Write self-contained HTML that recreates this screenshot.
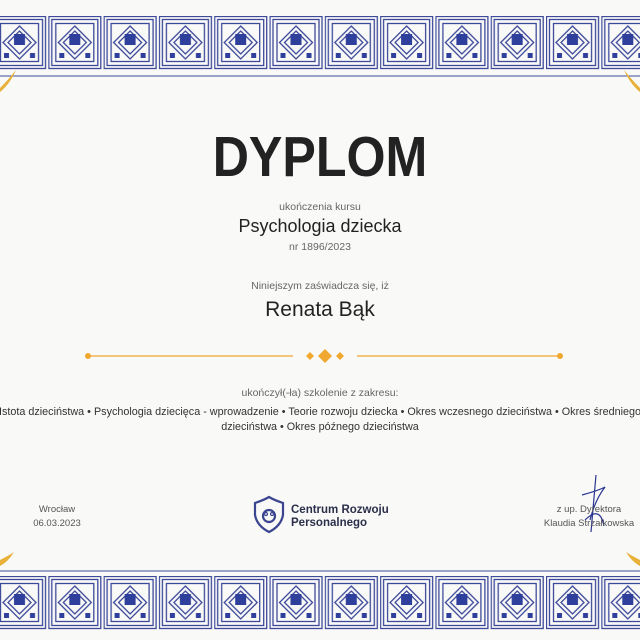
<!DOCTYPE html>
<html><head><meta charset="utf-8"><style>
body{margin:0;width:640px;height:640px;overflow:hidden;background:#f9f9f8;font-family:"Liberation Sans",sans-serif;position:relative}
.t{position:absolute;left:0;width:640px;text-align:center;white-space:nowrap;color:#222}
.g{color:#666}
.clip{position:absolute;left:0;top:0;width:640px;height:640px;overflow:hidden}
</style></head><body>
<svg width="640" height="640" style="position:absolute;left:0;top:0">
<defs>
<g id="tile" fill="none" stroke="#3d4a9a" stroke-width="1.3">
<rect x="0.5" y="0.5" width="52" height="52"/>
<rect x="3.5" y="3.5" width="46" height="46"/>
<rect x="7.5" y="7.5" width="38" height="38"/>
<path d="M26.5 10 L43 26.5 L26.5 43 L10 26.5Z"/>
<path d="M26.5 15 L38 26.5 L26.5 38 L15 26.5Z"/>
<rect x="21" y="18" width="11" height="11" fill="#2f3f9c" stroke="none"/>
<rect x="11" y="37" width="5" height="5" fill="#2f3f9c" stroke="none"/>
<rect x="37" y="37" width="5" height="5" fill="#2f3f9c" stroke="none"/>
</g>
<pattern id="row" x="-7" y="0" width="55.3" height="60" patternUnits="userSpaceOnUse"><use href="#tile"/></pattern>
</defs>
<g transform="translate(0,16)"><rect x="0" y="0" width="640" height="54" fill="url(#row)"/></g>
<line x1="0" y1="76" x2="640" y2="76" stroke="#3d4a9a" stroke-width="1"/>
<g transform="translate(0,576)"><rect x="0" y="0" width="640" height="54" fill="url(#row)"/></g>
<line x1="0" y1="571" x2="640" y2="571" stroke="#3d4a9a" stroke-width="1"/>
<path d="M0 88 Q8 80 16 70 Q10 84 0 92Z" fill="#e8b23a"/>
<path d="M0 560 Q8 556 14 552 Q8 562 0 566Z" fill="#e8b23a"/>
<path d="M640 88 Q632 80 624 70 Q630 84 640 92Z" fill="#e8b23a"/>
<path d="M640 560 Q632 556 626 552 Q632 562 640 566Z" fill="#e8b23a"/>
<g fill="#f0a830" stroke="#f0a830">
<circle cx="88" cy="356" r="3" stroke="none"/><line x1="88" y1="356" x2="293" y2="356" stroke-width="1.3"/>
<circle cx="560" cy="356" r="3" stroke="none"/><line x1="357" y1="356" x2="560" y2="356" stroke-width="1.3"/>
<path d="M310 352 L314 356 L310 360 L306 356Z" stroke="none"/>
<path d="M325 349 L332 356 L325 363 L318 356Z" stroke="none"/>
<path d="M340 352 L344 356 L340 360 L336 356Z" stroke="none"/>
</g>
<g fill="none" stroke="#3b4590" stroke-width="2.2">
<path d="M255 503 Q264 500 269 497 Q274 500 283 503 L283 515 Q281 526 269 532 Q257 526 255 515Z"/>
<circle cx="269" cy="516" r="6"/>
<circle cx="266" cy="514" r="1.5" stroke-width="1.2"/><circle cx="272" cy="514" r="1.5" stroke-width="1.2"/>
</g>
<path d="M596 475 L591 532 M582 495 Q600 490 605 487 Q595 500 590 520 M585 520 Q600 505 604 526" fill="none" stroke="#2a3590" stroke-width="1.2"/>
</svg>
<div class="clip">
<div class="t" style="top:124px;font-size:57px;font-weight:bold;transform:scaleX(0.88);color:#222">DYPLOM</div>
<div class="t g" style="top:201px;font-size:10.5px">ukończenia kursu</div>
<div class="t" style="top:216px;font-size:18px">Psychologia dziecka</div>
<div class="t g" style="top:241px;font-size:10.5px">nr 1896/2023</div>
<div class="t g" style="top:280px;font-size:10.5px">Niniejszym zaświadcza się, iż</div>
<div class="t" style="top:298px;font-size:21px">Renata Bąk</div>
<div class="t g" style="top:387px;font-size:10.5px">ukończył(-ła) szkolenie z zakresu:</div>
<div class="t" style="top:406px;font-size:10.8px;left:-320px;width:1280px;color:#333">Istota dzieciństwa • Psychologia dziecięca - wprowadzenie • Teorie rozwoju dziecka • Okres wczesnego dzieciństwa • Okres średniego</div>
<div class="t" style="top:421px;font-size:10.8px;color:#333">dzieciństwa • Okres późnego dzieciństwa</div>
</div>
<div style="position:absolute;left:57px;top:503px;transform:translateX(-50%);text-align:center;font-size:9.5px;color:#555;line-height:14px">Wrocław<br>06.03.2023</div>
<div style="position:absolute;left:291px;top:504px;font-size:11.5px;font-weight:bold;color:#2b2f4a;line-height:13px">Centrum Rozwoju<br>Personalnego</div>
<div style="position:absolute;left:589px;top:503px;transform:translateX(-50%);text-align:center;font-size:9.5px;color:#555;line-height:14px;white-space:nowrap">z up. Dyrektora<br>Klaudia Strzałkowska</div>
</body></html>
